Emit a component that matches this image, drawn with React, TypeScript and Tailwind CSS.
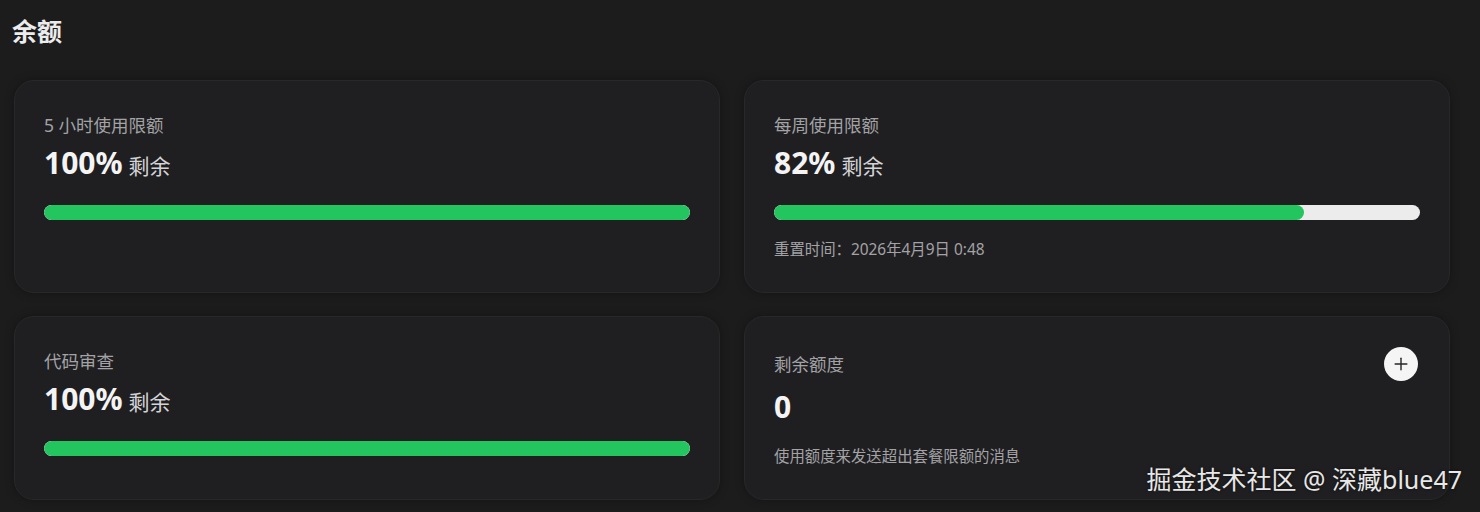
import { Plus } from "lucide-react";

type Quota = {
    label: string
    percent: number
    reset?: string
}

const limits: Quota[] = [
    { label: "5 小时使用限额", percent: 100 },
    { label: "每周使用限额", percent: 82, reset: "重置时间：2026年4月9日 0:48" },
    { label: "代码审查", percent: 100 },
]

const Card = ({ children }: { children: React.ReactNode }) => (
    <div className="rounded-[20px] border border-[#28282a] bg-[#1f1f21] px-[29px] pt-8 pb-8 shadow-[0_0_10px_rgba(0,0,0,0.3)]">
        {children}
    </div>
)

const LimitCard = ({ item }: { item: Quota }) => (
    <Card>
        <div className="text-[17.5px] leading-6 text-[#a3a3a6]">{item.label}</div>
        <div className="mt-2 flex items-baseline gap-[6px] leading-9">
            <span className="text-[30px] font-bold text-[#f4f4f5]">{item.percent}%</span>
            <span className="text-[21px] text-[#d4d4d6]">剩余</span>
        </div>
        {/* progress */}
        <div className="mt-[21px] h-[15px] w-full overflow-hidden rounded-full bg-[#ececec]">
            <div className="h-full rounded-full bg-[#22c55e]" style={{ width: `${item.percent}%` }} />
        </div>
        {item.reset && (
            <div className="mt-5 text-[15.4px] leading-5 text-[#a3a3a6]">{item.reset}</div>
        )}
    </Card>
)

const CreditCard = () => (
    <Card>
        <div className="-mt-[2px] flex items-center justify-between">
            <span className="text-[17.5px] leading-6 text-[#a3a3a6]">剩余额度</span>
            <button className="mr-[2px] flex h-[34px] w-[34px] items-center justify-center rounded-full bg-[#f5f5f5] text-[#262626]">
                <Plus size={20} strokeWidth={1.7} />
            </button>
        </div>
        <div className="mt-2 text-[30px] font-bold leading-9 text-[#f4f4f5]">0</div>
        <div className="mt-[22px] text-[15.4px] leading-5 text-[#a3a3a6]">使用额度来发送超出套餐限额的消息</div>
    </Card>
)

export default function App() {
    return (
        <div
            className="relative h-[512px] w-[1480px] overflow-hidden bg-[#1c1c1d] pt-[15px]"
            style={{ fontFamily: '"Noto Sans", "Noto Sans CJK SC", sans-serif' }}
        >
            <h1 className="ml-3 text-[25px] font-semibold leading-8 text-[#ececec]">余额</h1>
            <div className="ml-[14px] mt-[33px] grid w-[1436px] grid-cols-2 gap-x-6 gap-y-[23px]">
                <LimitCard item={limits[0]} />
                <LimitCard item={limits[1]} />
                <LimitCard item={limits[2]} />
                <CreditCard />
            </div>
            {/* watermark */}
            <div className="absolute bottom-[17px] right-[18px] text-[25px] leading-8 text-[#e8e8e8] [text-shadow:0_0_3px_rgba(0,0,0,0.6)]">
                掘金技术社区 @ 深藏blue47
            </div>
        </div>
    )
}
